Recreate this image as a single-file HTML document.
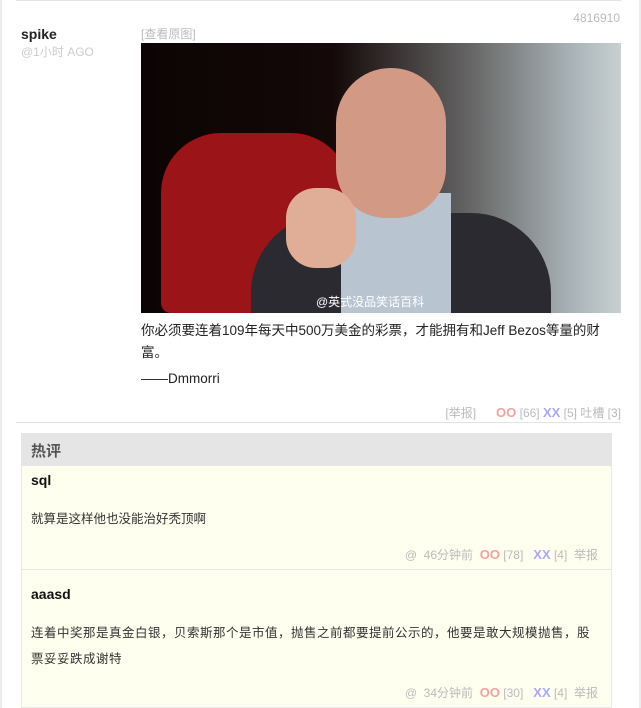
<!DOCTYPE html>
<html><head><meta charset="utf-8"><style>
body{margin:0;width:641px;height:708px;background:#fff;font-family:"Liberation Sans","Noto Sans CJK SC",sans-serif;position:relative;overflow:hidden}
.a{position:absolute}
.g{color:#bbb}
.oo{color:#f4a0a0;font-weight:bold;font-size:13px}
.xx{color:#a8a8ff;font-weight:bold;font-size:13px}
</style></head><body>
<div class="a" style="left:0;top:0;width:2px;height:708px;background:#ececec"></div>
<div class="a" style="right:0;top:0;width:2px;height:708px;background:#ececec"></div>
<div class="a" style="left:16px;top:0;width:605px;height:1px;background:#e3e3e3"></div>
<div class="a g" style="right:21px;top:11px;font-size:12px">4816910</div>
<div class="a" style="left:21px;top:26px;font-size:14px;font-weight:bold;color:#222">spike</div>
<div class="a" style="left:21px;top:43px;font-size:12px;color:#ccc">@1小时 AGO</div>
<div class="a g" style="left:141px;top:25px;font-size:12px">[查看原图]</div>
<div class="a" style="left:141px;top:43px;width:480px;height:270px;background:linear-gradient(90deg,#0c0404 0%,#140808 40%,#6a6a6a 70%,#aab4b8 90%,#c8d0d0 100%);overflow:hidden">
<div class="a" style="left:20px;top:90px;width:190px;height:180px;background:#9a1418;border-radius:60px 60px 10px 10px"></div>
<div class="a" style="left:110px;top:170px;width:300px;height:120px;background:#2a2a30;border-radius:80px 80px 0 0"></div>
<div class="a" style="left:200px;top:150px;width:110px;height:120px;background:#b8c4d0"></div>
<div class="a" style="left:195px;top:25px;width:110px;height:150px;background:#d29a84;border-radius:55px 55px 50px 50px"></div>
<div class="a" style="left:145px;top:145px;width:70px;height:80px;background:#e0ae96;border-radius:30px"></div>
<div class="a" style="left:175px;top:250px;color:#fff;font-size:12px">@英式没品笑话百科</div>
</div>
<div class="a" style="left:141px;top:320px;width:482px;font-size:13.5px;line-height:22px;color:#222">你必须要连着109年每天中500万美金的彩票，才能拥有和Jeff Bezos等量的财富。</div>
<div class="a" style="left:141px;top:371px;font-size:13.5px;color:#222">——Dmmorri</div>
<div class="a g" style="right:20px;top:404px;font-size:12px">[举报]&nbsp;&nbsp;&nbsp;&nbsp;&nbsp; <span class="oo">OO</span> [66] <span class="xx">XX</span> [5] 吐槽 [3]</div>
<div class="a" style="left:16px;top:422px;width:605px;height:1px;background:#e3e3e3"></div>
<div class="a" style="left:21px;top:433px;width:591px;height:275px;background:#fffff0;border:1px solid #e8e8e8;box-sizing:border-box"></div>
<div class="a" style="left:21px;top:433px;width:591px;height:33px;background:#e5e5e5"></div>
<div class="a" style="left:31px;top:440px;font-size:15px;font-weight:bold;color:#555">热评</div>
<div class="a" style="left:31px;top:472px;font-size:14px;font-weight:bold;color:#111">sql</div>
<div class="a" style="left:31px;top:508px;font-size:12.5px;color:#333">就算是这样他也没能治好秃顶啊</div>
<div class="a g" style="right:43px;top:546px;font-size:12px">@&nbsp; 46分钟前&nbsp; <span class="oo">OO</span> [78]&nbsp;&nbsp; <span class="xx">XX</span> [4]&nbsp; 举报</div>
<div class="a" style="left:22px;top:569px;width:589px;height:1px;background:#e6e6e6"></div>
<div class="a" style="left:31px;top:586px;font-size:14px;font-weight:bold;color:#111">aaasd</div>
<div class="a" style="left:31px;top:620px;width:600px;font-size:12.5px;line-height:26px;color:#333;white-space:nowrap;letter-spacing:0.5px">连着中奖那是真金白银，贝索斯那个是市值，抛售之前都要提前公示的，他要是敢大规模抛售，股<br>票妥妥跌成谢特</div>
<div class="a g" style="right:43px;top:684px;font-size:12px">@&nbsp; 34分钟前&nbsp; <span class="oo">OO</span> [30]&nbsp;&nbsp; <span class="xx">XX</span> [4]&nbsp; 举报</div>
</body></html>
